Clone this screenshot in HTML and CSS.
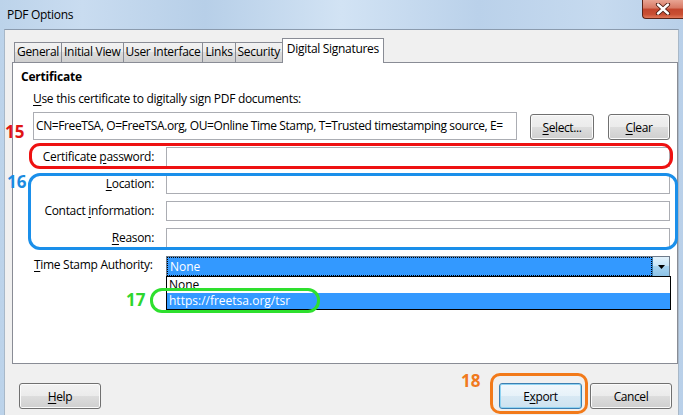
FILE: index.html
```html
<!DOCTYPE html>
<html lang="en">
<head>
  <meta charset="UTF-8">
  <meta name="viewport" content="width=device-width, initial-scale=1.0">
  <title>PDF Options</title>
  <link rel="stylesheet" href="styles.css">
</head>
<body>
  <div class="window">
    <div class="titlebar">
      <span class="title">PDF Options</span>
      <span class="close">
        <svg width="16" height="12" viewBox="0 0 16 12">
          <path d="M3 1.5 L13 10.5 M13 1.5 L3 10.5" stroke="#4a1a10" stroke-width="4.2" stroke-linecap="round"/>
          <path d="M3 1.5 L13 10.5 M13 1.5 L3 10.5" stroke="#ffffff" stroke-width="2.4" stroke-linecap="round"/>
        </svg>
      </span>
    </div>

    <div class="client">
      <div class="tabs">
        <span class="tab">General</span>
        <span class="tab">Initial View</span>
        <span class="tab">User Interface</span>
        <span class="tab">Links</span>
        <span class="tab">Security</span>
        <span class="tab active">Digital Signatures</span>
      </div>

      <div class="panel">
        <div class="group-title">Certificate</div>
        <div class="hint"><u>U</u>se this certificate to digitally sign PDF documents:</div>
        <div class="cert-row">
          <div class="cert-box">CN=FreeTSA, O=FreeTSA.org, OU=Online Time Stamp, T=Trusted timestamping source, E=</div>
          <span class="btn select-btn"><u>S</u>elect...</span>
          <span class="btn clear-btn"><u>C</u>lear</span>
        </div>

        <div class="form">
          <label>Certificate <u>p</u>assword:</label>
          <div class="field"></div>
          <label><u>L</u>ocation:</label>
          <div class="field"></div>
          <label>Contact <u>i</u>nformation:</label>
          <div class="field"></div>
          <label><u>R</u>eason:</label>
          <div class="field"></div>
          <label><u>T</u>ime Stamp Authority:</label>
          <div class="combo">
            <div class="combo-value"><span class="combo-text">None</span></div>
            <span class="combo-arrow">
              <svg width="7" height="4" viewBox="0 0 7 4"><path d="M0 0 H7 L3.5 4 Z" fill="#000"/></svg>
            </span>
            <ul class="combo-list">
              <li>None</li>
              <li class="selected">https://freetsa.org/tsr</li>
            </ul>
          </div>
        </div>
      </div>

      <div class="footer">
        <span class="btn"><u>H</u>elp</span>
        <span class="spacer"></span>
        <span class="btn default">E<u>x</u>port</span>
        <span class="btn">Cancel</span>
      </div>
    </div>

    <!-- callouts drawn over the dialog -->
    <span class="num num-15">15</span>
    <span class="ring ring-15"></span>
    <span class="num num-16">16</span>
    <span class="ring ring-16"></span>
    <span class="num num-17">17</span>
    <span class="ring ring-17"></span>
    <span class="num num-18">18</span>
    <span class="ring ring-18"></span>
  </div>
</body>
</html>
```

FILE: styles.css
```css
* {
  box-sizing: border-box;
}
body {
  margin: 0;
  font-family: "Open Sans", "Noto Sans", sans-serif;
  font-size: 12px;
  color: #000;
  background: #f0f0f0;
}
u {
  text-decoration: underline;
  text-underline-offset: 2px;
}
.window {
  position: relative;
  width: 683px;
  height: 415px;
  overflow: hidden;
  display: flex;
  flex-direction: column;
  background: linear-gradient(to right, #bcd3ea, #c9dcf0 12%, #b7cfe8 30%, #d2e3f4 50%, #bad1ea 70%, #c6daef 88%, #b9d0e9);
}
.titlebar {
  height: 29px;
  display: flex;
  align-items: center;
  padding-left: 7px;
  flex-shrink: 0;
}
.title {
  font-size: 12px;
  letter-spacing: -0.3px;
  margin-top: -1px;
}
.close {
  position: absolute;
  top: 0;
  right: 0;
  width: 41px;
  height: 19px;
  border: 1px solid #5a2418;
  border-top: none;
  border-right: none;
  border-radius: 0 0 0 4px;
  background: linear-gradient(#e8a493, #d77863 45%, #c2452d 50%, #c94f33 80%, #e0785a);
  display: flex;
  align-items: center;
  justify-content: center;
}
.client {
  flex: 1;
  margin: 0 4px 0 4px;
  background: #f0f0f0;
  border-top: 1px solid #8b9bae;
  border-left: 1px solid #a8b8c8;
  border-right: 1px solid #a8b8c8;
  padding: 8px 0 0 7px;
  display: flex;
  flex-direction: column;
}

/* tabs */
.tabs {
  display: flex;
  align-items: flex-end;
  height: 24px;
  padding-left: 2px;
  position: relative;
  z-index: 1;
}
.tab {
  height: 20px;
  padding: 0 2px;
  line-height: 18px;
  border: 1px solid #898c95;
  border-bottom: none;
  margin-right: -1px;
  background: linear-gradient(#f2f2f2, #ebebeb 50%, #dddddd 50%, #cfcfcf);
  letter-spacing: -0.3px;
  white-space: nowrap;
}
.tab.active {
  background: #fff;
  padding: 0 4px;
  line-height: 20px;
  margin-bottom: -1px;
  height: 25px;
}
.panel {
  height: 302px;
  background: #fff;
  border: 1px solid #898c95;
  padding: 6px 7px 0 0;
}
.group-title {
  font-weight: bold;
  line-height: 16px;
  margin-left: 8px;
  letter-spacing: -0.2px;
}
.hint {
  line-height: 16px;
  margin: 6px 0 0 20px;
  letter-spacing: -0.3px;
}
.cert-row {
  display: flex;
  align-items: flex-end;
  margin: 5px 0 0 20px;
}
.cert-box {
  width: 484px;
  height: 28px;
  border: 1px solid #abadb3;
  padding: 0 2px;
  line-height: 26px;
  white-space: nowrap;
  overflow: hidden;
  letter-spacing: -0.4px;
}
.btn {
  display: inline-flex;
  align-items: center;
  justify-content: center;
  height: 26px;
  border: 1px solid #707070;
  border-radius: 3px;
  background: linear-gradient(#f2f2f2, #ebebeb 50%, #dddddd 50%, #cfcfcf);
  box-shadow: inset 0 0 0 1px #fbfbfb;
  letter-spacing: -0.4px;
}
.select-btn {
  width: 64px;
  margin-left: 13px;
}
.clear-btn {
  width: 62px;
  margin-left: 14px;
}

/* label / field grid */
.form {
  display: grid;
  grid-template-columns: 153px 1fr;
  row-gap: 7px;
  margin-top: 7px;
}
.form label {
  text-align: right;
  padding-right: 12px;
  line-height: 20px;
  letter-spacing: -0.3px;
  white-space: nowrap;
}
.form label:last-of-type {
  text-align: left;
  padding-left: 21px;
}
.field {
  height: 20px;
  border: 1px solid #abadb3;
}
.combo {
  position: relative;
  height: 21px;
  display: flex;
  border: 1px solid #6e7b8a;
  background: #3399ff;
  margin-top: 1px;
}
.combo-value {
  flex: 1;
  border: 1px dotted #000;
  color: #fff;
  line-height: 17px;
  padding-left: 2px;
}
.combo-arrow {
  width: 17px;
  border-left: 1px solid #3c7fb1;
  background: linear-gradient(#e3f2fb, #c4e4f7 50%, #a6d3f0 50%, #8cc2e6);
  display: flex;
  align-items: center;
  justify-content: center;
}
.combo-list {
  position: absolute;
  top: 19px;
  left: -1px;
  right: -2px;
  margin: 0;
  padding: 0;
  list-style: none;
  background: #fff;
  border: 1px solid #000;
}
.combo-list li {
  height: 16px;
  line-height: 15px;
  padding-left: 2px;
}
.combo-list li.selected {
  background: #3399ff;
  color: #fff;
}

/* bottom buttons */
.footer {
  display: flex;
  align-items: center;
  margin-top: 19px;
  padding: 0 6px 0 7px;
}
.footer .btn {
  width: 82px;
}
.footer .btn.default {
  width: 83px;
  margin-right: 8px;
  border-color: #3c7fb1;
  box-shadow: inset 0 0 0 1px #8fd3f2;
  background: linear-gradient(#f1f8fc, #e6f2f9 50%, #d8e9f4 50%, #cde2ef);
}
.spacer {
  flex: 1;
}

/* numbered callouts */
.num {
  position: absolute;
  font-family: "Open Sans", sans-serif;
  font-weight: bold;
  font-size: 17px;
  line-height: 17px;
}
.ring {
  position: absolute;
  border: 3px solid;
  border-radius: 11px;
}
.num-15 { left: 5px; top: 123px; color: #e01414; }
.ring-15 { left: 29px; top: 143px; width: 644px; height: 26px; border-color: #ee1111; }
.num-16 { left: 7px; top: 173px; color: #1b8be0; }
.ring-16 { left: 28px; top: 173px; width: 650px; height: 77px; border-color: #1a8fea; border-radius: 12px; }
.num-17 { left: 126px; top: 291px; color: #2ed62e; }
.ring-17 { left: 150px; top: 288px; width: 170px; height: 25px; border-color: #2ee02e; border-radius: 12px; }
.num-18 { left: 461px; top: 372px; color: #f07a1e; }
.ring-18 { left: 490px; top: 373px; width: 98px; height: 41px; border-color: #f27a1a; border-radius: 10px; }
```
